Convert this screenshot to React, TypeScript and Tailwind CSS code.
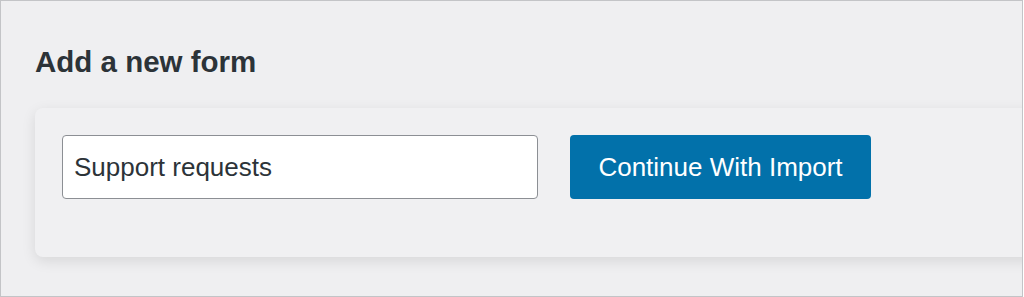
import { useState } from 'react'

export default function App() {
  const [title, setTitle] = useState('Support requests')

  return (
    <div
      className="w-[1023px] h-[297px] border border-[#c3c4c7] bg-[#efeff1] overflow-hidden"
      style={{ fontFamily: '"Liberation Sans", Arial, sans-serif' }}
    >
      <h1 className="ml-[34px] mt-[46px] text-[29.5px] leading-[29px] font-bold text-[#2c3338]">Add a new form</h1>

      {/* カード */}
      <div className="ml-[34px] -mr-[20px] mt-[32px] h-[149px] rounded-lg bg-[#f0f0f2] shadow-[0_4px_14px_rgba(0,0,0,0.10)] pl-[27px] pt-[27px]">
        <div className="flex items-start gap-[32px]">
          <input
            value={title}
            onChange={(e) => setTitle(e.target.value)}
            className="w-[476px] h-[64px] rounded-[4px] border border-[#8c8f94] bg-white px-[11px] text-[26px] text-[#2c3338] outline-none"
          />
          <button className="w-[301px] h-[64px] rounded-[4px] bg-[#0271aa] text-[26px] text-white">
            Continue With Import
          </button>
        </div>
      </div>
    </div>
  )
}
